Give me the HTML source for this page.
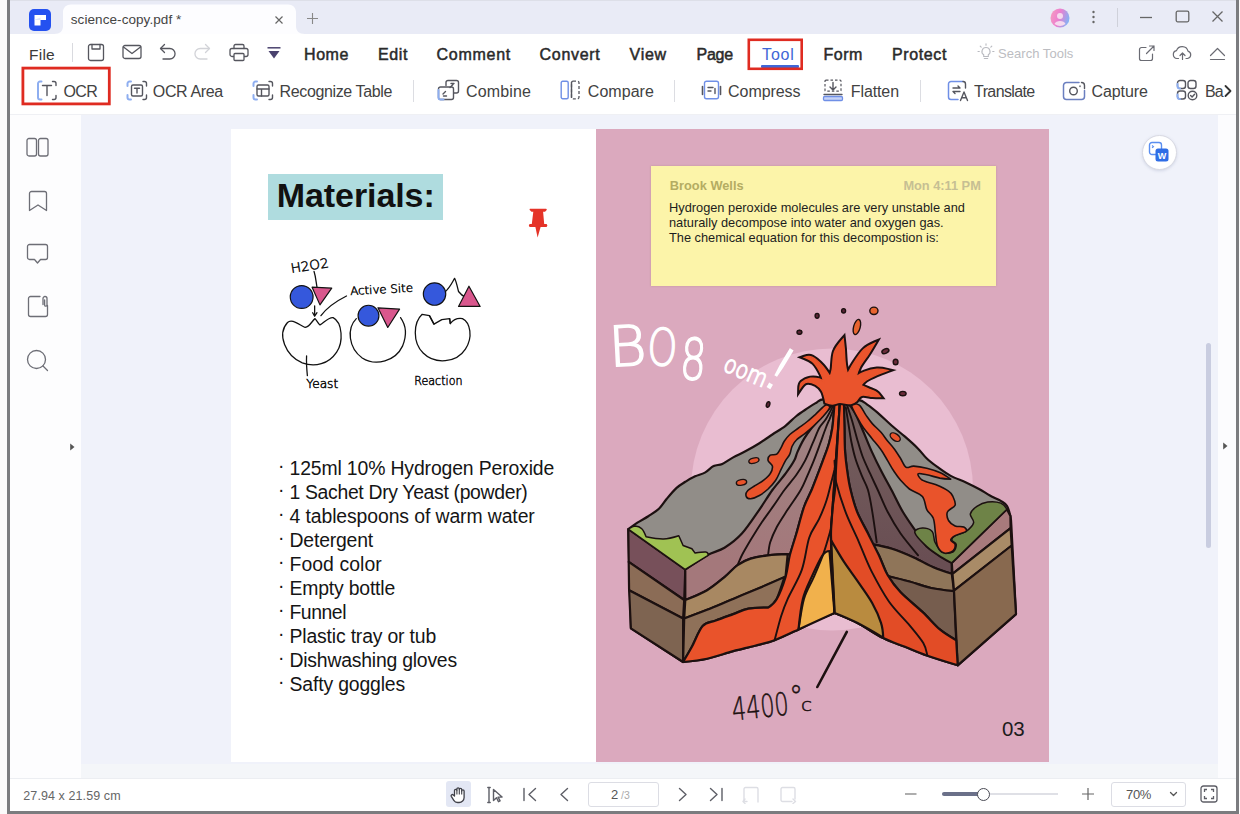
<!DOCTYPE html>
<html lang="en">
<head>
<meta charset="utf-8">
<title>science-copy.pdf</title>
<style>
*{box-sizing:border-box;margin:0;padding:0}
html,body{width:1240px;height:814px;overflow:hidden;background:#fbfbfb;font-family:"Liberation Sans",sans-serif;color:#2b2b2b}
#win{position:absolute;left:7px;top:0;width:1232px;height:814px;background:#fff;border-left:3px solid #7b7c7f;border-right:3px solid #7b7c7f;border-bottom:3px solid #7b7c7f;overflow:hidden}
#app{position:absolute;left:-10px;top:0;width:1240px;height:814px}
.abs{position:absolute}
.t{position:absolute;white-space:nowrap;line-height:1}
#titlebar{left:10px;top:0;width:1226px;height:34px;background:#e9ebf6;border-top:1px solid #dddfe8}
#tab{left:62px;top:5px;width:236px;height:29px;background:#f7f8fc;border-radius:8px 8px 0 0}
#menurow{left:10px;top:34px;width:1226px;height:38px;background:#fff}
#toolrow{left:10px;top:72px;width:1226px;height:43px;background:#fff;border-bottom:1px solid #eff0f4}
#main{left:10px;top:115px;width:1226px;height:663px;background:#f0f2fa}
#sidebar{left:10px;top:115px;width:70.500px;height:663px;background:#fdfdfe}
#status{left:10px;top:778px;width:1226px;height:34px;background:#fff;border-top:1px solid #eceef2}
.m{font-size:16px;font-weight:normal;-webkit-text-stroke:0.5px #2a2a2a;color:#2a2a2a;top:47px}
.tb{font-size:16px;color:#424242;top:84px}
.sep{position:absolute;width:1px;background:#dcdde2}
.li{font-size:19.400px;color:#151515}
#pageL{left:231px;top:129px;width:365px;height:633px;background:#fff}
#pageR{left:596px;top:129px;width:453px;height:633px;background:#dba9be}
</style>
</head>
<body>
<div id="win"><div id="app">

<!-- TITLE BAR -->
<div id="titlebar" class="abs"></div>
<svg class="abs" style="left:54px;top:4px" width="252" height="30" viewBox="54 4 252 30"><path d="M54 34C60 34 63 31 63 26V12C63 7.500 66.500 4.500 71 4.500H288C292.500 4.500 296 7.500 296 12V26C296 31 299 34 305 34Z" fill="#fdfdff"/></svg>

<svg class="abs" style="left:29px;top:9px" width="22" height="22" viewBox="0 0 22 22"><rect x="0" y="0" width="22" height="22" rx="5" fill="#2451f0"/><path d="M5.5 6h11.5v5h-5.5v5.5h-6z" fill="#fff"/><path d="M5.5 10.8l6-2.2v2.4h-6z" fill="#dfe6ff"/></svg>
<div class="t" id="tTitle" style="left:70.8px;top:13px;font-size:13.500px;color:#444;letter-spacing:0.07px">science-copy.pdf *</div>
<svg class="abs" style="left:274px;top:15px" width="10" height="10" viewBox="0 0 10 10"><path d="M1.5 1.5l7 7M8.500 1.5l-7 7" stroke="#666" stroke-width="1.2" fill="none"/></svg>
<svg class="abs" style="left:306px;top:12px" width="13" height="13" viewBox="0 0 13 13"><path d="M6.500 1v11M1 6.500h11" stroke="#888" stroke-width="1.1" fill="none"/></svg>
<svg class="abs" style="left:1050px;top:8px" width="20" height="20" viewBox="0 0 20 20"><defs><linearGradient id="av" x1="0" y1="0.3" x2="1" y2="0.6"><stop offset="0" stop-color="#f59ac0"/><stop offset="0.45" stop-color="#ec7fd0"/><stop offset="1" stop-color="#7fb4f6"/></linearGradient></defs><circle cx="10" cy="10" r="9.500" fill="url(#av)"/><circle cx="10" cy="8" r="3" fill="#f6d9ee"/><path d="M4.500 16c1-4 10-4 11 0a9 9 0 0 1-11 0z" fill="#f6d9ee"/></svg>
<svg class="abs" style="left:1091px;top:9px" width="5" height="16" viewBox="0 0 5 16"><circle cx="2.500" cy="3" r="1.200" fill="#666"/><circle cx="2.500" cy="8" r="1.200" fill="#666"/><circle cx="2.500" cy="13" r="1.200" fill="#666"/></svg>
<div class="sep" style="left:1117px;top:8px;height:19px;background:#cfd1da"></div>
<svg class="abs" style="left:1139px;top:10px" width="14" height="14" viewBox="0 0 14 14"><path d="M1 7.500h12" stroke="#666" stroke-width="1.300"/></svg>
<svg class="abs" style="left:1174.500px;top:10px" width="15" height="13" viewBox="0 0 15 13"><rect x="1.200" y="1.200" width="12.600" height="10.600" rx="1.500" fill="none" stroke="#666" stroke-width="1.300"/></svg>
<svg class="abs" style="left:1211px;top:10px" width="13" height="13" viewBox="0 0 13 13"><path d="M1.500 1.500l10 10M11.500 1.500l-10 10" stroke="#666" stroke-width="1.300" fill="none"/></svg>
<!--TITLE-CONTENT-->

<!-- MENU ROW -->
<div id="menurow" class="abs"></div>

<div class="t" id="mFile" style="left:29.1px;top:47px;font-size:15.5px;color:#3a3a3a;letter-spacing:0.2px">File</div>
<div class="sep" style="left:72px;top:43px;height:19px;background:#d9dadf"></div>
<svg class="abs" style="left:87px;top:43px" width="18" height="19" viewBox="0 0 18 19"><path d="M3.500 1.500h11a2 2 0 0 1 2 2v12a2 2 0 0 1-2 2h-11a2 2 0 0 1-2-2v-12a2 2 0 0 1 2-2z" stroke="#55565e" stroke-width="1.3" fill="none" stroke-linecap="round" stroke-linejoin="round"/><path d="M5 1.500v4.500h8v-4.500" stroke="#55565e" stroke-width="1.3" fill="none" stroke-linecap="round" stroke-linejoin="round"/></svg>
<svg class="abs" style="left:122px;top:44px" width="20" height="16" viewBox="0 0 20 16"><rect x="1" y="1.500" width="18" height="13" rx="2" stroke="#55565e" stroke-width="1.3" fill="none" stroke-linecap="round" stroke-linejoin="round"/><path d="M1.500 3l8.500 6.500 8.500-6.500" stroke="#55565e" stroke-width="1.3" fill="none" stroke-linecap="round" stroke-linejoin="round"/></svg>
<svg class="abs" style="left:159px;top:43px" width="18" height="18" viewBox="0 0 18 18"><path d="M5.500 1.500l-4 4 4 4" stroke="#55565e" stroke-width="1.3" fill="none" stroke-linecap="round" stroke-linejoin="round"/><path d="M1.800 5.500h9a5 5 0 0 1 0 10.500h-6.800" stroke="#55565e" stroke-width="1.3" fill="none" stroke-linecap="round" stroke-linejoin="round"/></svg>
<svg class="abs" style="left:193px;top:43px" width="18" height="18" viewBox="0 0 18 18"><path d="M12.500 1.500l4 4-4 4" stroke="#d2d3d8" stroke-width="1.300" fill="none" stroke-linecap="round" stroke-linejoin="round"/><path d="M16.200 5.500h-9a5 5 0 0 0 0 10.500h6.800" stroke="#d2d3d8" stroke-width="1.300" fill="none" stroke-linecap="round"/></svg>
<svg class="abs" style="left:229px;top:43px" width="20" height="19" viewBox="0 0 20 19"><path d="M5 5.500v-2.500a1.500 1.500 0 0 1 1.500-1.500h7a1.500 1.500 0 0 1 1.500 1.500v2.500" stroke="#55565e" stroke-width="1.3" fill="none" stroke-linecap="round" stroke-linejoin="round"/><rect x="1" y="5.500" width="18" height="8" rx="2" stroke="#55565e" stroke-width="1.3" fill="none" stroke-linecap="round" stroke-linejoin="round"/><rect x="5" y="10.500" width="10" height="7" rx="1" fill="#fff" stroke="#55565e" stroke-width="1.300"/></svg>
<svg class="abs" style="left:267px;top:46px" width="14" height="14" viewBox="0 0 14 14"><path d="M0.500 1.800h13" stroke="#4a426e" stroke-width="1.500"/><path d="M1.500 5h11l-5.500 7.500z" fill="#4a426e"/></svg>
<div class="t m" id="mHome" style="left:304.1px;letter-spacing:0.53px">Home</div>
<div class="t m" id="mEdit" style="left:378.1px;letter-spacing:0.56px">Edit</div>
<div class="t m" id="mComment" style="left:436.6px;letter-spacing:0.71px">Comment</div>
<div class="t m" id="mConvert" style="left:539.6px;letter-spacing:0.68px">Convert</div>
<div class="t m" id="mView" style="left:629.6px;letter-spacing:0.73px">View</div>
<div class="t m" id="mPage" style="left:696.6px;letter-spacing:-0.27px">Page</div>
<div class="t m" id="mTool" style="left:762.1px;color:#3f66d6;-webkit-text-stroke:0px;letter-spacing:0.8px">Tool</div>
<div class="abs" style="left:761px;top:64.500px;width:38px;height:3px;background:#3f66d6;border-radius:1px"></div>
<svg class="abs" style="left:744px;top:35px" width="64" height="40" viewBox="744 35 64 40"><rect x="748.800" y="39.800" width="52.900" height="29" fill="none" stroke="#df2b21" stroke-width="2.600"/></svg>
<div class="t m" id="mForm" style="left:823.6px;letter-spacing:0.43px">Form</div>
<div class="t m" id="mProtect" style="left:892.1px;letter-spacing:0.59px">Protect</div>
<svg class="abs" style="left:977px;top:43px" width="18" height="18" viewBox="0 0 18 18"><g stroke="#b9bac0" stroke-width="1.100" fill="none" stroke-linecap="round"><path d="M9 4.500a4 4 0 0 1 2.300 7.300v1.700h-4.600v-1.700a4 4 0 0 1 2.300-7.300z"/><path d="M7.300 15.500h3.400M9 0.800v1.500M3.200 3.200l1 1M14.800 3.200l-1 1M1 8.500h1.300M15.700 8.500h1.300"/></g></svg>
<div class="t" id="mSearch" style="left:998.1px;top:47px;font-size:13px;color:#bcbdc2;letter-spacing:0.03px">Search Tools</div>
<svg class="abs" style="left:1138px;top:45px" width="18" height="17" viewBox="0 0 18 17"><g stroke="#6a6b73" stroke-width="1.200" fill="none" stroke-linecap="round" stroke-linejoin="round"><path d="M8 2.500h-4.500a2 2 0 0 0-2 2v9a2 2 0 0 0 2 2h9a2 2 0 0 0 2-2v-4.500"/><path d="M8.500 8.500l7.500-7.500M11.500 1h4.500v4.500"/></g></svg>
<svg class="abs" style="left:1172px;top:44px" width="21" height="17" viewBox="0 0 21 17"><g stroke="#6a6b73" stroke-width="1.200" fill="none" stroke-linecap="round" stroke-linejoin="round"><path d="M6.500 14.500h-1.500a4 4 0 0 1-0.500-7.900a6 6 0 0 1 11.500 0.500a3.800 3.800 0 0 1-0.500 7.400h-1.500"/><path d="M10.500 15.500v-6M8 11.500l2.500-2.500 2.500 2.500"/></g></svg>
<svg class="abs" style="left:1209px;top:46px" width="17" height="15" viewBox="0 0 17 15"><g stroke="#6a6b73" stroke-width="1.200" fill="none" stroke-linecap="round" stroke-linejoin="round"><path d="M1.500 9.500l7-7 7 7"/><path d="M1.500 13.500h14"/></g></svg>
<!--MENU-CONTENT-->

<!-- TOOL ROW -->
<div id="toolrow" class="abs"></div>

<svg class="abs" style="left:18px;top:63px" width="96" height="46" viewBox="18 63 96 46"><rect x="22.900" y="68.100" width="86.400" height="35.800" fill="none" stroke="#df2b21" stroke-width="2.800"/></svg>
<svg class="abs" style="left:36px;top:80px" width="22" height="21" viewBox="0 0 22 21"><path d="M5.500 1.500h-1.500a2 2 0 0 0-2 2v14a2 2 0 0 0 2 2h1.500" stroke="#8eaef0" stroke-width="2" fill="none" stroke-linecap="round" stroke-linejoin="round"/><path d="M16.500 1.500h1.500a2 2 0 0 1 2 2v2M16.500 19.500h1.500a2 2 0 0 0 2-2v-2" stroke="#55565e" stroke-width="1.4" fill="none" stroke-linecap="round" stroke-linejoin="round"/><path d="M6.500 5.500h9M11 5.500v10" stroke="#55565e" stroke-width="1.4" fill="none" stroke-linecap="round" stroke-linejoin="round"/></svg>
<div class="t tb" id="tOCR" style="left:63.6px;letter-spacing:-0.67px">OCR</div>
<svg class="abs" style="left:126px;top:80px" width="22" height="21" viewBox="0 0 22 21"><path d="M5 1.500h-1.500a2 2 0 0 0-2 2v2.500M5 19.500h-1.500a2 2 0 0 1-2-2v-2.500" stroke="#8eaef0" stroke-width="2" fill="none" stroke-linecap="round" stroke-linejoin="round"/><path d="M17 1.500h1.500a2 2 0 0 1 2 2v2.500M17 19.500h1.500a2 2 0 0 0 2-2v-2.500" stroke="#55565e" stroke-width="1.4" fill="none" stroke-linecap="round" stroke-linejoin="round"/><rect x="5.500" y="5" width="11" height="11" rx="1.500" stroke="#55565e" stroke-width="1.4" fill="none" stroke-linecap="round" stroke-linejoin="round"/><path d="M8.500 8.200h5M11 8.200v4.800" stroke="#55565e" stroke-width="1.4" fill="none" stroke-linecap="round" stroke-linejoin="round"/></svg>
<div class="t tb" id="tOCRArea" style="left:152.85px;letter-spacing:-0.36px">OCR Area</div>
<svg class="abs" style="left:252px;top:80px" width="22" height="21" viewBox="0 0 22 21"><path d="M5 1.500h-1.500a2 2 0 0 0-2 2v2.500M5 19.500h-1.500a2 2 0 0 1-2-2v-2.500" stroke="#8eaef0" stroke-width="2" fill="none" stroke-linecap="round" stroke-linejoin="round"/><path d="M17 1.500h1.500a2 2 0 0 1 2 2v2.500M17 19.500h1.500a2 2 0 0 0 2-2v-2.500" stroke="#55565e" stroke-width="1.4" fill="none" stroke-linecap="round" stroke-linejoin="round"/><rect x="5" y="5" width="12" height="11" rx="1.500" stroke="#55565e" stroke-width="1.4" fill="none" stroke-linecap="round" stroke-linejoin="round"/><path d="M5 9h12M9.500 9v7" stroke="#55565e" stroke-width="1.4" fill="none" stroke-linecap="round" stroke-linejoin="round"/></svg>
<div class="t tb" id="tRecog" style="left:279.6px;letter-spacing:-0.38px">Recognize Table</div>
<div class="sep" style="left:413px;top:80px;height:22px"></div>
<svg class="abs" style="left:437px;top:79px" width="23" height="22" viewBox="0 0 23 22"><path d="M9 6.500v-3a2 2 0 0 1 2-2h8.500a2 2 0 0 1 2 2v8.500a2 2 0 0 1-2 2h-3" stroke="#55565e" stroke-width="1.4" fill="none" stroke-linecap="round" stroke-linejoin="round"/><path d="M3.500 8h11a2 2 0 0 1 2 2v8.500a2 2 0 0 1-2 2h-11a2 2 0 0 1-2-2v-8.500a2 2 0 0 1 2-2z" fill="#fff" stroke="#55565e" stroke-width="1.4" fill="none" stroke-linecap="round" stroke-linejoin="round"/><path d="M1.500 11v7.500a2 2 0 0 0 2 2h3" stroke="#8eaef0" stroke-width="2" fill="none" stroke-linecap="round" stroke-linejoin="round"/><path d="M6 15l2.500-2.500M6.500 17h3M13 8.500l3-3M14 4.500h3" stroke="#55565e" stroke-width="1.4" fill="none" stroke-linecap="round" stroke-linejoin="round"/></svg>
<div class="t tb" id="tCombine" style="left:466.1px;letter-spacing:0.11px">Combine</div>
<svg class="abs" style="left:560px;top:80px" width="21" height="20" viewBox="0 0 21 20"><rect x="1.200" y="1.200" width="7" height="17.600" rx="1.500" stroke="#6f8fe6" stroke-width="1.400" fill="none"/><rect x="11.500" y="1.200" width="7.500" height="17.600" rx="1.500" stroke="#55565e" stroke-width="1.300" fill="none" stroke-dasharray="3 2"/><path d="M11.500 2v16" stroke="#55565e" stroke-width="1.400"/></svg>
<div class="t tb" id="tCompare" style="left:587.85px;letter-spacing:0.03px">Compare</div>
<div class="sep" style="left:674px;top:80px;height:22px"></div>
<svg class="abs" style="left:701px;top:80px" width="21" height="21" viewBox="0 0 21 21"><rect x="3.500" y="1.200" width="14" height="17.600" rx="2" stroke="#6f8fe6" stroke-width="1.400" fill="none"/><path d="M1.500 6.500v8M19.500 6.500v8" stroke="#55565e" stroke-width="1.600" stroke-linecap="round"/><path d="M7 7.500h5M7 11h3M14 8.500v5" stroke="#55565e" stroke-width="1.4" fill="none" stroke-linecap="round" stroke-linejoin="round"/></svg>
<div class="t tb" id="tCompress" style="left:728.1px;letter-spacing:-0.08px">Compress</div>
<svg class="abs" style="left:822px;top:79px" width="22" height="23" viewBox="0 0 22 23"><rect x="3" y="1.200" width="16" height="11" rx="1" stroke="#55565e" stroke-width="1.200" fill="none" stroke-dasharray="2.500 2"/><path d="M11 3.500v7M8 8l3 3 3-3" stroke="#55565e" stroke-width="1.4" fill="none" stroke-linecap="round" stroke-linejoin="round"/><path d="M2 15.500h18" stroke="#55565e" stroke-width="1.4" fill="none" stroke-linecap="round" stroke-linejoin="round"/><rect x="1.500" y="17.500" width="19" height="4" rx="1.200" fill="#c6d3f7" stroke="#6f8fe6" stroke-width="1.300"/></svg>
<div class="t tb" id="tFlatten" style="left:850.85px;letter-spacing:-0.12px">Flatten</div>
<div class="sep" style="left:920px;top:80px;height:22px"></div>
<svg class="abs" style="left:947px;top:80px" width="22" height="22" viewBox="0 0 22 22"><path d="M16 1.500h-12a2.500 2.500 0 0 0-2.500 2.500v13a2.500 2.500 0 0 0 2.500 2.500h7" stroke="#6f8fe6" stroke-width="1.500" fill="none" stroke-linecap="round"/><path d="M16 1.500a2.500 2.500 0 0 1 2.500 2.500v4" stroke="#55565e" stroke-width="1.4" fill="none" stroke-linecap="round" stroke-linejoin="round"/><path d="M6 8h7M11 6l2 2M13 11.500h-7M8 13.500l-2-2" stroke="#55565e" stroke-width="1.4" fill="none" stroke-linecap="round" stroke-linejoin="round"/><path d="M13.500 20.500l3.500-8.500 3.500 8.500M14.800 17.800h4.400" stroke="#55565e" stroke-width="1.4" fill="none" stroke-linecap="round" stroke-linejoin="round"/></svg>
<div class="t tb" id="tTranslate" style="left:974.1px;letter-spacing:-0.62px">Translate</div>
<svg class="abs" style="left:1062px;top:81px" width="24" height="20" viewBox="0 0 24 20"><path d="M17 1.500h-12.500a3 3 0 0 0-3 3v11a3 3 0 0 0 3 3h15a3 3 0 0 0 3-3v-6" stroke="#6b7fc0" stroke-width="1.500" fill="none" stroke-linecap="round"/><path d="M19.500 1.500a3 3 0 0 1 3 3v3" stroke="#55565e" stroke-width="1.4" fill="none" stroke-linecap="round" stroke-linejoin="round"/><circle cx="11.500" cy="10" r="3.800" stroke="#55565e" stroke-width="1.4" fill="none" stroke-linecap="round" stroke-linejoin="round"/><path d="M18 5v0.500" stroke="#55565e" stroke-width="1.4" fill="none" stroke-linecap="round" stroke-linejoin="round"/></svg>
<div class="t tb" id="tCapture" style="left:1091.6px;letter-spacing:-0.12px">Capture</div>
<svg class="abs" style="left:1176px;top:79px" width="22" height="22" viewBox="0 0 22 22"><rect x="1.500" y="1.500" width="8" height="8" rx="2.500" stroke="#55565e" stroke-width="1.4" fill="none" stroke-linecap="round" stroke-linejoin="round"/><rect x="12" y="1.500" width="8" height="8" rx="2.500" stroke="#55565e" stroke-width="1.4" fill="none" stroke-linecap="round" stroke-linejoin="round"/><rect x="1.500" y="12" width="8" height="8" rx="2.500" stroke="#55565e" stroke-width="1.4" fill="none" stroke-linecap="round" stroke-linejoin="round"/><circle cx="16.500" cy="16.500" r="4.300" stroke="#55565e" stroke-width="1.4" fill="none" stroke-linecap="round" stroke-linejoin="round"/><path d="M14.600 16.500l1.500 1.500 2.500-2.800" stroke="#55565e" stroke-width="1.4" fill="none" stroke-linecap="round" stroke-linejoin="round"/><path d="M1.500 5v2a2.500 2.500 0 0 0 2.500 2.500M1.500 15.500v2a2.500 2.500 0 0 0 2.500 2.500" stroke="#8eaef0" stroke-width="2" fill="none" stroke-linecap="round" stroke-linejoin="round"/></svg>
<div class="t tb" id="tBa" style="left:1204.9px;letter-spacing:-0.8px">Ba</div>
<svg class="abs" style="left:1223px;top:84px" width="10" height="14" viewBox="0 0 10 14"><path d="M2.500 2l5 5-5 5" stroke="#333" stroke-width="1.800" fill="none" stroke-linecap="round" stroke-linejoin="round"/></svg>
<!--TOOL-CONTENT-->

<!-- MAIN -->
<div id="main" class="abs"></div>
<div class="abs" style="left:80.500px;top:764px;width:1137.500px;height:14px;background:#f4f6f9"></div>
<div id="sidebar" class="abs"></div>

<svg class="abs" style="left:26px;top:137px" width="23" height="21" viewBox="0 0 23 21"><rect x="1" y="1.500" width="9.500" height="17.500" rx="2" stroke="#6d6e76" stroke-width="1.3" fill="none" stroke-linecap="round" stroke-linejoin="round"/><rect x="12.500" y="1.500" width="9.500" height="17.500" rx="2" stroke="#6d6e76" stroke-width="1.3" fill="none" stroke-linecap="round" stroke-linejoin="round"/></svg>
<svg class="abs" style="left:28px;top:190px" width="20" height="22" viewBox="0 0 20 22"><path d="M1.500 20.500v-17a2 2 0 0 1 2-2h13a2 2 0 0 1 2 2v17l-8.500-5.500z" stroke="#6d6e76" stroke-width="1.3" fill="none" stroke-linecap="round" stroke-linejoin="round"/></svg>
<svg class="abs" style="left:26px;top:243px" width="23" height="22" viewBox="0 0 23 22"><path d="M3.500 1.500h16a2 2 0 0 1 2 2v11a2 2 0 0 1-2 2h-5l-3 3.500-3-3.500h-5a2 2 0 0 1-2-2v-11a2 2 0 0 1 2-2z" stroke="#6d6e76" stroke-width="1.3" fill="none" stroke-linecap="round" stroke-linejoin="round"/></svg>
<svg class="abs" style="left:27px;top:295px" width="22" height="23" viewBox="0 0 22 23"><path d="M13 1.500h-9.500a2 2 0 0 0-2 2v16a2 2 0 0 0 2 2h15a2 2 0 0 0 2-2v-9" stroke="#6d6e76" stroke-width="1.3" fill="none" stroke-linecap="round" stroke-linejoin="round"/><path d="M16 9.500v-6a2 2 0 0 1 4 0v6.500a1.200 1.200 0 0 1-2.400 0v-5" stroke="#6d6e76" stroke-width="1.3" fill="none" stroke-linecap="round" stroke-linejoin="round"/></svg>
<svg class="abs" style="left:26px;top:349px" width="23" height="23" viewBox="0 0 23 23"><circle cx="10.500" cy="10.500" r="9" stroke="#6d6e76" stroke-width="1.3" fill="none" stroke-linecap="round" stroke-linejoin="round"/><path d="M17 17l4.500 4.500" stroke="#6d6e76" stroke-width="1.3" fill="none" stroke-linecap="round" stroke-linejoin="round"/></svg>
<svg class="abs" style="left:69px;top:442px" width="7" height="10" viewBox="0 0 7 10"><path d="M1.200 1.500l4.300 3.500-4.300 3.500z" fill="#555"/></svg>
<!--SIDEBAR-CONTENT-->

<div id="pageL" class="abs"></div>
<div id="pageR" class="abs"></div>
<!--PAGEL-START-->
<div class="abs" style="left:268px;top:173.500px;width:174.500px;height:46.500px;background:#afdcdf"></div>
<div class="t" id="hMat" style="left:276.8px;top:178px;font-size:34px;font-weight:bold;color:#111;letter-spacing:-0.09px">Materials:</div>
<svg class="abs" style="left:528px;top:208px" width="20" height="30" viewBox="0 0 20 30"><path d="M2 0.800h16a0.800 0.800 0 0 1 0.500 1.400l-1.500 1.600h-1.900l1.100 12.100h2.400l0.800 1.500-0.800 1.500h-6l-3 10.700-2.200-10.700h-5.800l-0.800-1.500 0.800-1.500h2.200l1.500-12.100h-1.800l-1.500-1.600a0.800 0.800 0 0 1 0-1.400z" fill="#e53328"/></svg>
<svg class="abs" style="left:260px;top:240px" width="240" height="160" viewBox="0 0 1221 814">
<g stroke="#111" stroke-width="6.500" fill="none" stroke-linecap="round" stroke-linejoin="round">
<path d="M140 420C160 400 190 425 230 445C255 440 265 410 280 400C290 410 295 425 305 432C325 420 350 392 372 395C420 420 425 520 390 570C350 630 280 650 215 625C130 590 85 480 140 420Z" fill="#fff"/>
<path d="M490 400C440 450 450 550 520 600C590 645 690 615 725 540C750 480 740 430 715 395" fill="#fff"/>
<path d="M825 378C780 420 775 520 830 575C890 635 1000 625 1045 555C1085 495 1070 420 1030 400C1000 395 980 410 968 425L965 400L925 405L885 428L862 385Z" fill="#fff"/>
<path d="M862 385L885 428M965 400L968 425"/>
<path d="M275 160C285 190 285 220 292 250"/>
<path d="M278 335V385M268 370L278 388L290 370"/>
<path d="M440 285C390 310 340 345 310 385"/>
<path d="M237 590C235 630 238 660 241 690"/>
<path d="M940 265C965 245 978 215 990 195C1000 215 1005 245 1010 262C1020 275 1030 285 1045 290"/>
</g>
<g stroke="#111" stroke-width="6" stroke-linejoin="round">
<circle cx="212" cy="290" r="58" fill="#3558dc"/>
<path d="M265 240L365 245L305 330Z" fill="#d9578d"/>
<circle cx="552" cy="385" r="53" fill="#3558dc"/>
<path d="M600 345L710 352L650 445Z" fill="#d9578d"/>
<circle cx="888" cy="275" r="57" fill="#3558dc"/>
<path d="M1010 338L1120 338L1063 235Z" fill="#d9578d"/>
</g>
<g fill="#111" stroke="#111" stroke-width="2.500" font-family="DejaVu Sans, Liberation Sans, sans-serif" font-weight="200">
<text x="160" y="168" font-size="66" transform="rotate(-9 160 168)" textLength="195" lengthAdjust="spacingAndGlyphs">H2O2</text>
<text x="460" y="280" font-size="58" transform="rotate(-3 460 280)" textLength="320" lengthAdjust="spacingAndGlyphs">Active Site</text>
<text x="236" y="752" font-size="58" textLength="162" lengthAdjust="spacingAndGlyphs">Yeast</text>
<text x="785" y="738" font-size="58" textLength="245" lengthAdjust="spacingAndGlyphs">Reaction</text>
</g>
</svg>

<div class="t li" style="left:278px;top:459px;margin-top:-3.500px">·</div><div class="t li" id="li0" style="left:289.5px;top:459px;letter-spacing:-0.14px">125ml 10% Hydrogen Peroxide</div>
<div class="t li" style="left:278px;top:483.05px;margin-top:-3.500px">·</div><div class="t li" id="li1" style="left:289.5px;top:483.05px;letter-spacing:-0.33px">1 Sachet Dry Yeast (powder)</div>
<div class="t li" style="left:278px;top:507.1px;margin-top:-3.500px">·</div><div class="t li" id="li2" style="left:289.5px;top:507.1px;letter-spacing:-0.1px">4 tablespoons of warm water</div>
<div class="t li" style="left:278px;top:531.15px;margin-top:-3.500px">·</div><div class="t li" id="li3" style="left:289.5px;top:531.15px;letter-spacing:-0.18px">Detergent</div>
<div class="t li" style="left:278px;top:555.2px;margin-top:-3.500px">·</div><div class="t li" id="li4" style="left:289.5px;top:555.2px;letter-spacing:0.07px">Food color</div>
<div class="t li" style="left:278px;top:579.25px;margin-top:-3.500px">·</div><div class="t li" id="li5" style="left:289.5px;top:579.25px;letter-spacing:-0.19px">Empty bottle</div>
<div class="t li" style="left:278px;top:603.3px;margin-top:-3.500px">·</div><div class="t li" id="li6" style="left:289.5px;top:603.3px;letter-spacing:-0.47px">Funnel</div>
<div class="t li" style="left:278px;top:627.35px;margin-top:-3.500px">·</div><div class="t li" id="li7" style="left:289.5px;top:627.35px;letter-spacing:-0.17px">Plastic tray or tub</div>
<div class="t li" style="left:278px;top:651.4px;margin-top:-3.500px">·</div><div class="t li" id="li8" style="left:289.5px;top:651.4px;letter-spacing:-0.22px">Dishwashing gloves</div>
<div class="t li" style="left:278px;top:675.45px;margin-top:-3.500px">·</div><div class="t li" id="li9" style="left:289.5px;top:675.45px;letter-spacing:-0.15px">Safty goggles</div>

<!--PAGEL-END-->
<!--PAGEL-CONTENT-->
<!--PAGER-START-->
<svg class="abs" style="left:596px;top:129px" width="453" height="633" viewBox="596 129 453 633">
<circle cx="832" cy="489.500" r="141" fill="#e9bdd1"/>
<defs><linearGradient id="gl" gradientUnits="userSpaceOnUse" x1="0" y1="400" x2="0" y2="560"><stop offset="0" stop-color="#9d8482"/><stop offset="1" stop-color="#a4787b"/></linearGradient><linearGradient id="gr" gradientUnits="userSpaceOnUse" x1="0" y1="400" x2="0" y2="560"><stop offset="0" stop-color="#76615f"/><stop offset="1" stop-color="#694e53"/></linearGradient></defs>
<path d="M628.3 529.2C628.3 529.2 634.1 524.9 637.4 522.7C640.8 520.5 644.7 518.5 648.3 516.2C651.9 513.8 656.1 511.5 659.2 508.5C662.3 505.6 663.9 502.2 666.8 498.8C669.7 495.3 673.5 490.7 676.6 487.9C679.7 485.0 682.2 483.7 685.3 481.8C688.4 479.8 691.9 477.8 695.1 476.3C698.4 474.8 701.8 474.3 704.9 472.6C708.0 470.9 710.7 467.5 713.6 466.1C716.5 464.6 719.1 465.4 722.3 463.9C725.6 462.5 729.2 459.6 733.2 457.4C737.2 455.2 741.9 453.2 746.3 450.8C750.6 448.5 755.0 445.9 759.4 443.2C763.7 440.5 768.1 437.4 772.4 434.5C776.8 431.6 781.5 428.9 785.5 425.8C789.5 422.7 792.7 418.9 796.4 416.0C800.0 413.1 804.0 410.6 807.3 408.4C810.5 406.2 813.1 404.5 816.0 402.9C818.9 401.4 817.8 399.8 824.7 399.2C831.5 398.7 849.9 398.7 857.1 399.7C864.3 400.7 864.4 402.8 868.0 405.1C871.6 407.5 874.9 410.4 878.9 413.8C882.9 417.3 887.6 422.0 891.9 425.8C896.3 429.6 900.6 432.9 905.0 436.7C909.4 440.5 914.4 445.0 918.1 448.7C921.7 452.3 923.5 455.4 926.8 458.5C930.0 461.6 933.7 464.3 937.7 467.2C941.7 470.1 946.0 473.3 950.7 475.9C955.4 478.4 961.2 480.2 966.0 482.4C970.7 484.6 975.0 486.8 979.0 489.0C983.0 491.1 986.3 493.5 989.9 495.5C993.5 497.5 998.0 499.2 1000.8 500.9C1003.6 502.7 1005.3 503.4 1006.9 505.9C1008.5 508.5 1009.7 513.0 1010.4 516.1C1011.1 519.3 1011.3 524.8 1011.3 524.8C1011.3 524.8 1016.0 614.1 1016.0 614.1C1016.0 614.1 957.7 665.3 957.7 665.3C957.7 665.3 935.6 658.6 926.8 655.5C918.0 652.4 912.3 649.7 905.0 646.8C897.7 643.9 891.2 642.1 883.2 638.1C875.2 634.1 865.2 627.0 857.1 622.8C849.0 618.6 834.7 613.0 834.7 613.0C834.7 613.0 822.0 617.9 816.0 620.6C809.9 623.4 805.4 626.1 798.5 629.4C791.7 632.6 781.9 637.5 774.6 640.2C767.3 643.0 761.9 643.9 755.0 645.7C748.1 647.5 741.2 649.0 733.2 651.1C725.2 653.3 715.4 656.9 707.1 658.8C698.8 660.6 683.1 662.0 683.1 662.0C683.1 662.0 630.9 628.3 630.9 628.3C630.9 628.3 628.3 529.2 628.3 529.2Z" fill="#918d88" stroke="#1c1010" stroke-width="2.2" stroke-linejoin="round" stroke-linecap="round"/>
<polygon points="628.3,529.2 685.3,569.5 684.2,600.0 628.7,561.9" fill="#77505a" stroke="#1c1010" stroke-width="2.2" stroke-linejoin="round"/>
<polygon points="628.7,561.9 684.2,600.0 683.1,618.5 629.1,590.2" fill="#8b6c56" stroke="#1c1010" stroke-width="2.2" stroke-linejoin="round"/>
<polygon points="629.1,590.2 683.1,618.5 683.1,662.0 630.9,628.3" fill="#7e6451" stroke="#1c1010" stroke-width="2.2" stroke-linejoin="round"/>
<path d="M685.3 569.5C685.3 569.5 700.6 559.0 707.1 555.3C713.6 551.7 718.7 551.3 724.5 547.7C730.3 544.1 736.1 539.9 741.9 533.5C747.7 527.2 754.3 516.8 759.4 509.6C764.4 502.3 768.1 496.0 772.4 490.0C776.8 484.1 781.9 478.6 785.5 473.7C789.1 468.8 792.2 464.3 794.2 460.6C796.2 457.0 795.8 455.6 797.5 451.9C799.1 448.3 801.6 442.9 804.0 438.9C806.4 434.9 808.7 431.6 811.6 428.0C814.5 424.4 818.0 420.9 821.4 417.1C824.9 413.3 830.1 407.3 832.3 405.1C834.5 402.9 834.3 402.0 834.5 404.0C834.7 406.0 833.8 413.1 833.4 417.1C833.0 421.1 833.0 423.6 832.3 428.0C831.6 432.3 830.6 437.8 829.0 443.2C827.5 448.7 824.9 455.2 822.9 460.6C820.9 466.1 818.9 471.0 817.1 475.9C815.2 480.8 813.8 484.9 811.6 490.0C809.4 495.2 806.5 499.7 804.0 507.0C801.5 514.2 798.7 525.5 796.4 533.5C794.0 541.6 789.8 555.3 789.8 555.3C789.8 555.3 791.3 554.2 787.7 554.2C784.0 554.2 774.2 554.6 768.1 555.3C761.9 556.0 755.7 557.0 750.6 558.6C745.6 560.2 741.9 562.0 737.6 565.1C733.2 568.2 729.6 572.9 724.5 577.1C719.4 581.3 713.6 586.4 707.1 590.2C700.6 594.0 685.3 600.0 685.3 600.0C685.3 600.0 685.3 569.5 685.3 569.5Z" fill="url(#gl)" stroke="#1c1010" stroke-width="2.2" stroke-linejoin="round" stroke-linecap="round"/>
<path d="M833.0 406.2C831.8 408.4 828.1 415.6 825.8 419.3C823.5 422.9 821.4 424.0 819.2 428.0C817.1 432.0 815.1 437.8 812.7 443.2C810.3 448.7 807.8 455.4 805.1 460.6C802.4 465.9 799.8 469.9 796.4 474.8C792.9 479.7 788.4 484.6 784.4 490.0C780.4 495.5 776.2 502.0 772.4 507.4C768.6 512.9 765.2 517.2 761.5 522.7C757.9 528.1 753.9 534.6 750.6 540.1C747.4 545.5 744.1 551.1 741.9 555.3C739.8 559.5 738.3 563.5 737.6 565.1" fill="none" stroke="#1c1010" stroke-width="1.9" stroke-linecap="round" stroke-linejoin="round"/>
<path d="M833.8 408.4C833.1 410.2 830.8 416.0 829.5 419.3C828.1 422.5 827.3 424.0 825.8 428.0C824.2 432.0 822.3 437.8 820.3 443.2C818.3 448.7 816.0 455.2 813.8 460.6C811.6 466.1 809.4 471.0 807.3 475.9C805.1 480.8 804.0 484.4 800.7 490.0C797.5 495.7 791.7 503.4 787.7 509.6C783.7 515.8 779.7 521.6 776.8 527.0C773.9 532.5 771.7 537.5 770.2 542.3C768.8 547.0 768.4 553.1 768.1 555.3" fill="none" stroke="#1c1010" stroke-width="1.9" stroke-linecap="round" stroke-linejoin="round"/>
<path d="M685.3 600.0C685.3 600.0 700.6 594.0 707.1 590.2C713.6 586.4 719.4 581.3 724.5 577.1C729.6 572.9 733.2 568.2 737.6 565.1C741.9 562.0 745.6 560.2 750.6 558.6C755.7 557.0 761.9 556.0 768.1 555.3C774.2 554.6 787.7 554.2 787.7 554.2C787.7 554.2 785.5 577.1 785.5 577.1C785.5 577.1 768.1 584.4 759.4 588.0C750.6 591.6 741.9 595.2 733.2 598.9C724.5 602.5 715.3 606.5 707.1 609.8C698.9 613.0 684.2 618.5 684.2 618.5C684.2 618.5 685.3 600.0 685.3 600.0Z" fill="#a88862" stroke="#1c1010" stroke-width="2.2" stroke-linejoin="round" stroke-linecap="round"/>
<path d="M684.2 618.5C684.2 618.5 698.9 613.0 707.1 609.8C715.3 606.5 724.5 602.5 733.2 598.9C741.9 595.2 750.8 591.6 759.4 588.0C767.9 584.4 784.4 577.1 784.4 577.1C784.4 577.1 779.1 593.8 776.8 598.9C774.4 604.0 770.2 607.6 770.2 607.6C770.2 607.6 754.6 607.6 748.5 608.7C742.3 609.8 738.7 612.1 733.2 614.1C727.8 616.1 720.9 618.6 715.8 620.6C710.7 622.6 706.7 621.7 702.7 626.1C698.8 630.4 695.1 640.8 691.9 646.8C688.6 652.8 683.1 662.0 683.1 662.0C683.1 662.0 684.2 618.5 684.2 618.5Z" fill="#8f7159" stroke="#1c1010" stroke-width="2.2" stroke-linejoin="round" stroke-linecap="round"/>
<path d="M844.0 404.0C843.2 407.8 844.3 420.0 844.5 428.0C844.6 436.0 844.6 444.7 845.1 451.9C845.6 459.2 846.4 465.2 847.3 471.5C848.2 477.9 848.9 483.3 850.6 490.0C852.2 496.7 854.2 504.5 857.1 511.8C860.0 519.0 865.4 528.1 868.0 533.5C870.5 539.0 872.3 544.4 872.3 544.4C872.3 544.4 885.0 546.6 891.9 548.8C898.8 551.0 906.8 554.4 913.7 557.5C920.6 560.6 927.0 564.6 933.3 567.3C939.7 570.0 951.8 573.8 951.8 573.8C951.8 573.8 951.8 562.9 951.8 562.9C951.8 562.9 946.2 560.2 942.0 557.5C937.8 554.8 931.1 551.0 926.8 546.6C922.4 542.3 919.9 537.2 915.9 531.4C911.9 525.6 906.9 518.7 902.8 511.8C898.8 504.9 895.1 496.7 891.5 490.0C887.9 483.3 884.8 477.9 881.5 471.5C878.2 465.2 874.9 458.5 871.9 451.9C868.9 445.4 866.3 438.5 863.6 432.3C861.0 426.2 858.4 419.5 856.0 414.9C853.6 410.4 851.5 406.9 849.5 405.1C847.5 403.3 844.9 400.2 844.0 404.0Z" fill="url(#gr)" stroke="#1c1010" stroke-width="2.2" stroke-linejoin="round" stroke-linecap="round"/>
<path d="M847.3 405.8C848.1 408.4 850.7 415.9 852.3 421.5C853.9 427.0 855.4 433.1 857.1 438.9C858.8 444.7 860.4 450.5 862.5 456.3C864.7 462.1 867.6 468.1 870.2 473.7C872.7 479.3 874.9 483.7 877.8 490.0C880.7 496.4 883.8 504.5 887.6 511.8C891.4 519.0 895.6 526.3 900.6 533.5C905.7 540.8 915.2 551.7 918.1 555.3" fill="none" stroke="#1c1010" stroke-width="1.9" stroke-linecap="round" stroke-linejoin="round"/>
<path d="M845.8 407.3C846.2 410.0 847.5 418.0 848.4 423.6C849.3 429.3 850.1 435.2 851.2 441.0C852.4 446.9 853.6 452.7 855.4 458.5C857.1 464.3 859.8 470.6 861.9 475.9C864.0 481.1 866.2 484.1 868.0 490.0C869.7 496.0 870.9 503.1 872.3 511.8C873.8 520.5 876.0 537.2 876.7 542.3" fill="none" stroke="#1c1010" stroke-width="1.9" stroke-linecap="round" stroke-linejoin="round"/>
<path d="M872.3 544.4C872.3 544.4 885.0 546.6 891.9 548.8C898.8 551.0 906.8 554.4 913.7 557.5C920.6 560.6 927.0 564.6 933.3 567.3C939.7 570.0 951.8 573.8 951.8 573.8C951.8 573.8 954.0 591.2 954.0 591.2C954.0 591.2 938.6 589.6 931.1 588.0C923.7 586.4 916.6 583.4 909.4 581.5C902.1 579.5 887.6 576.0 887.6 576.0C887.6 576.0 881.4 560.6 878.9 555.3C876.3 550.1 872.3 544.4 872.3 544.4Z" fill="#8f7559" stroke="#1c1010" stroke-width="2.2" stroke-linejoin="round" stroke-linecap="round"/>
<path d="M887.6 576.0C887.6 576.0 902.1 579.5 909.4 581.5C916.6 583.4 923.7 586.4 931.1 588.0C938.6 589.6 954.0 591.2 954.0 591.2C954.0 591.2 956.2 640.2 956.2 640.2C956.2 640.2 945.5 634.1 939.8 629.4C934.2 624.6 929.0 618.1 922.4 611.9C915.9 605.8 906.5 598.3 900.6 592.3C894.8 586.4 887.6 576.0 887.6 576.0Z" fill="#765d4e" stroke="#1c1010" stroke-width="2.2" stroke-linejoin="round" stroke-linecap="round"/>
<polygon points="951.8,562.9 1006.9,509.2 1010.4,516.1 1010.6,528.1 952.5,573.8" fill="#a87a7c" stroke="#1c1010" stroke-width="2.2" stroke-linejoin="round"/>
<polygon points="952.5,573.8 1010.6,528.1 1011.7,545.5 954.0,590.6" fill="#a98b67" stroke="#1c1010" stroke-width="2.2" stroke-linejoin="round"/>
<polygon points="954.0,590.6 1011.7,545.5 1016.0,614.1 957.7,665.3" fill="#88694f" stroke="#1c1010" stroke-width="2.2" stroke-linejoin="round"/>
<path d="M683.1 662.0C683.1 662.0 688.6 652.8 691.9 646.8C695.1 640.8 698.8 630.4 702.7 626.1C706.7 621.7 710.7 622.6 715.8 620.6C720.9 618.6 727.8 616.1 733.2 614.1C738.7 612.1 742.7 609.8 748.5 608.7C754.3 607.6 768.1 607.6 768.1 607.6C768.1 607.6 773.9 604.0 776.8 598.9C779.7 593.8 783.3 584.4 785.5 577.1C787.7 569.8 788.0 562.6 789.8 555.3C791.7 548.1 794.0 541.6 796.4 533.5C798.7 525.5 801.5 514.2 804.0 507.0C806.5 499.7 809.4 495.2 811.6 490.0C813.8 484.9 815.2 480.8 817.1 475.9C818.9 471.0 820.9 466.1 822.9 460.6C824.9 455.2 827.5 448.7 829.0 443.2C830.6 437.8 831.6 432.3 832.3 428.0C833.0 423.6 833.0 421.1 833.4 417.1C833.8 413.1 834.5 404.0 834.5 404.0C834.5 404.0 839.9 403.6 839.9 403.6C839.9 403.6 833.8 489.0 832.3 511.8C830.8 534.5 830.8 523.2 831.2 540.1C831.6 557.0 834.5 613.0 834.5 613.0C834.5 613.0 822.0 617.9 816.0 620.6C810.0 623.4 805.4 626.1 798.5 629.4C791.7 632.6 781.9 637.5 774.6 640.2C767.3 643.0 761.9 643.9 755.0 645.7C748.1 647.5 741.2 649.0 733.2 651.1C725.2 653.3 715.4 656.9 707.1 658.8C698.8 660.6 683.1 662.0 683.1 662.0Z" fill="#e9532b" stroke="#1c1010" stroke-width="2.2" stroke-linejoin="round" stroke-linecap="round"/>
<path d="M829.5 551.0C829.5 551.0 834.5 613.0 834.5 613.0C834.5 613.0 798.5 629.4 798.5 629.4C798.5 629.4 800.7 607.6 802.9 598.9C805.1 590.2 808.3 584.4 811.6 577.1C814.9 569.8 819.5 559.7 822.5 555.3C825.5 551.0 829.5 551.0 829.5 551.0Z" fill="#f1b14c" stroke="#1c1010" stroke-width="2.2" stroke-linejoin="round" stroke-linecap="round"/>
<path d="M836.9 451.9C836.5 454.8 835.4 464.3 834.5 469.4C833.5 474.4 832.6 477.2 831.2 482.4C829.9 487.6 828.5 494.5 826.4 500.7C824.4 506.8 821.9 513.0 819.0 519.2C816.1 525.3 812.1 529.2 809.2 537.7C806.4 546.1 805.4 559.7 801.8 569.9C798.2 580.1 791.1 591.1 787.7 598.9C784.2 606.6 783.3 609.4 781.1 616.3C779.0 623.2 775.7 636.2 774.6 640.2" fill="none" stroke="#1c1010" stroke-width="1.9" stroke-linecap="round" stroke-linejoin="round"/>
<path d="M830.8 529.2C829.6 533.2 826.4 545.2 823.6 553.1C820.8 561.1 817.1 569.5 813.8 577.1C810.5 584.7 806.5 590.2 804.0 598.9C801.5 607.6 799.5 624.3 798.5 629.4" fill="none" stroke="#1c1010" stroke-width="1.9" stroke-linecap="round" stroke-linejoin="round"/>
<path d="M839.9 403.6C839.9 403.6 844.0 404.0 844.0 404.0C844.0 404.0 844.3 420.0 844.5 428.0C844.6 436.0 844.6 444.7 845.1 451.9C845.6 459.2 846.4 465.2 847.3 471.5C848.2 477.9 848.9 483.3 850.6 490.0C852.2 496.7 854.2 504.5 857.1 511.8C860.0 519.0 864.4 526.3 868.0 533.5C871.6 540.8 875.6 548.4 878.9 555.3C882.1 562.2 884.0 568.8 887.6 574.9C891.2 581.1 894.8 586.2 900.6 592.3C906.5 598.5 915.9 605.8 922.4 611.9C929.0 618.1 934.2 624.6 939.8 629.4C945.5 634.1 956.2 640.2 956.2 640.2C956.2 640.2 957.7 665.3 957.7 665.3C957.7 665.3 935.6 658.6 926.8 655.5C918.0 652.4 912.3 649.7 905.0 646.8C897.7 643.9 891.2 642.1 883.2 638.1C875.2 634.1 865.2 627.0 857.1 622.8C849.0 618.6 834.7 613.0 834.7 613.0C834.7 613.0 831.4 557.0 831.0 540.1C830.6 523.2 830.8 534.5 832.3 511.8C833.8 489.0 839.9 403.6 839.9 403.6Z" fill="#e24c26" stroke="#1c1010" stroke-width="2.2" stroke-linejoin="round" stroke-linecap="round"/>
<path d="M831.0 540.1C831.0 540.1 839.3 554.6 844.0 561.9C848.8 569.1 854.6 576.7 859.3 583.6C864.0 590.5 868.7 596.7 872.3 603.2C876.0 609.8 879.2 617.1 881.0 622.8C882.9 628.6 883.2 637.6 883.2 637.6C883.2 637.6 865.2 626.9 857.1 622.8C849.0 618.7 834.7 613.0 834.7 613.0C834.7 613.0 831.0 540.1 831.0 540.1Z" fill="#b98b3f" stroke="#1c1010" stroke-width="2.2" stroke-linejoin="round" stroke-linecap="round"/>
<path d="M834.5 460.6C834.6 462.5 835.0 467.9 835.3 471.5C835.6 475.2 834.4 475.5 836.2 482.4C838.0 489.3 842.2 503.2 846.0 513.1C849.8 523.0 854.6 532.2 858.8 541.8C863.0 551.4 866.2 560.6 871.2 570.6C876.3 580.5 882.5 592.3 888.9 601.5C895.3 610.6 903.8 618.5 909.6 625.4C915.3 632.4 920.4 638.2 923.3 643.1C926.2 648.0 926.6 652.9 927.2 654.8" fill="none" stroke="#1c1010" stroke-width="1.9" stroke-linecap="round" stroke-linejoin="round"/>
<path d="M839.5 404.0C839.2 409.8 838.3 427.6 837.7 438.9C837.2 450.1 836.4 463.0 836.0 471.5C835.6 480.1 835.7 483.3 835.1 490.0C834.5 496.7 833.0 503.4 832.3 511.8C831.6 520.1 830.8 523.2 831.2 540.1C831.6 557.0 833.9 600.9 834.5 613.0" fill="none" stroke="#1c1010" stroke-width="1.9" stroke-linecap="round" stroke-linejoin="round"/>
<path d="M825.8 405.1C823.5 406.1 819.1 411.1 816.0 413.8C812.9 416.6 810.2 419.1 807.3 421.5C804.4 423.8 801.5 425.8 798.5 428.0C795.6 430.2 792.2 432.3 789.8 434.5C787.5 436.7 785.8 438.9 784.4 441.0C782.9 443.2 782.4 445.4 781.1 447.6C779.9 449.8 778.6 452.8 776.8 454.1C775.0 455.4 771.7 454.1 770.2 455.2C768.8 456.3 767.7 458.8 768.1 460.6C768.4 462.5 772.1 463.9 772.4 466.1C772.8 468.3 771.7 471.4 770.2 473.7C768.8 476.1 766.2 478.2 763.7 480.2C761.2 482.2 757.7 483.9 755.0 485.7C752.3 487.5 748.8 489.3 747.4 491.1C745.9 492.9 745.7 495.3 746.3 496.6C746.8 497.8 748.5 498.9 750.6 498.8C752.8 498.6 756.5 497.1 759.4 495.5C762.3 493.9 765.3 491.5 768.1 489.0C770.8 486.4 773.5 483.5 775.7 480.2C777.9 477.0 779.5 472.6 781.1 469.4C782.8 466.1 784.0 463.2 785.5 460.6C786.9 458.1 788.8 456.5 789.8 454.1C790.9 451.8 790.9 448.9 792.0 446.5C793.1 444.1 794.2 442.1 796.4 440.0C798.5 437.8 802.2 435.8 805.1 433.4C808.0 431.1 810.9 428.5 813.8 425.8C816.7 423.1 819.9 420.1 822.5 417.1C825.1 414.1 828.9 409.9 829.5 408.0C830.0 406.0 828.0 404.1 825.8 405.1Z" fill="#e9532b" stroke="#1c1010" stroke-width="1.6" stroke-linejoin="round" stroke-linecap="round"/>
<path d="M914.8 532.5C914.1 529.4 919.5 528.3 922.4 528.1C925.3 527.9 930.1 529.0 932.2 531.4C934.3 533.7 933.4 538.8 935.0 542.3C936.7 545.7 939.0 550.4 942.0 552.1C945.0 553.7 950.5 553.3 952.9 552.1C955.3 550.8 956.4 546.4 956.2 544.4C956.0 542.4 952.0 541.5 951.8 540.1C951.6 538.6 952.7 537.2 955.1 535.7C957.4 534.3 962.9 533.5 966.0 531.4C969.1 529.2 972.9 525.6 973.6 522.7C974.3 519.8 969.8 516.7 970.3 514.0C970.9 511.2 974.0 508.3 976.9 506.3C979.8 504.3 983.8 502.5 987.7 502.0C991.7 501.4 997.6 501.9 1000.8 503.1C1004.0 504.3 1006.9 509.2 1006.9 509.2C1006.9 509.2 951.8 562.9 951.8 562.9C951.8 562.9 946.2 560.2 942.0 557.5C937.8 554.8 931.3 550.8 926.8 546.6C922.2 542.4 915.5 535.5 914.8 532.5Z" fill="#6e8347" stroke="#1c1010" stroke-width="1.5" stroke-linejoin="round" stroke-linecap="round"/>
<path d="M851.7 405.1C851.3 407.1 855.1 413.3 857.1 417.1C859.1 420.9 861.1 424.4 863.6 428.0C866.2 431.6 869.4 435.2 872.3 438.9C875.2 442.5 878.5 446.1 881.0 449.8C883.6 453.4 885.4 457.0 887.6 460.6C889.8 464.3 891.9 468.3 894.1 471.5C896.3 474.8 898.1 477.3 900.6 480.2C903.2 483.1 905.7 486.2 909.4 489.0C913.0 491.7 919.5 493.1 922.4 496.5C925.3 500.0 925.0 506.0 926.8 509.6C928.6 513.2 931.9 514.3 933.3 518.3C934.8 522.3 934.8 528.8 935.5 533.5C936.2 538.3 936.2 543.3 937.7 546.6C939.1 549.9 941.7 552.4 944.2 553.1C946.7 553.9 951.1 552.4 952.9 551.0C954.7 549.5 955.4 546.2 955.1 544.4C954.7 542.6 950.7 541.5 950.7 540.1C950.7 538.6 952.5 537.2 955.1 535.7C957.6 534.3 964.5 532.8 966.0 531.4C967.4 529.9 965.6 527.9 963.8 527.0C962.0 526.1 957.6 527.0 955.1 525.9C952.5 524.8 949.8 522.8 948.5 520.5C947.3 518.1 946.4 514.3 947.5 511.8C948.5 509.2 954.2 507.8 955.1 505.2C956.0 502.7 954.0 498.9 952.9 496.5C951.8 494.2 951.5 493.1 948.5 491.1C945.6 489.1 939.8 486.4 935.5 484.6C931.1 482.8 925.3 482.1 922.4 480.2C919.5 478.4 917.3 474.6 918.1 473.7C918.8 472.8 923.1 474.1 926.8 474.8C930.4 475.5 935.8 477.3 939.8 478.1C943.8 478.8 950.7 479.2 950.7 479.2C950.7 479.2 943.8 474.4 939.8 472.6C935.8 470.8 931.1 469.4 926.8 468.3C922.4 467.2 917.2 466.3 913.7 466.1C910.3 465.9 908.3 468.4 906.1 467.2C903.9 465.9 902.6 461.6 900.6 458.5C898.6 455.4 896.3 451.6 894.1 448.7C891.9 445.8 889.8 443.8 887.6 441.0C885.4 438.3 883.6 435.2 881.0 432.3C878.5 429.4 874.9 426.5 872.3 423.6C869.8 420.7 868.0 418.0 865.8 414.9C863.6 411.8 861.6 406.8 859.3 405.1C856.9 403.5 852.0 403.1 851.7 405.1Z" fill="#e9532b" stroke="#1c1010" stroke-width="1.6" stroke-linejoin="round" stroke-linecap="round"/>
<path d="M628.3 529.2C628.3 529.2 633.0 526.0 635.2 525.9C637.5 525.9 640.0 526.9 641.8 528.8C643.6 530.6 646.1 536.8 646.1 536.8C646.1 536.8 658.1 539.2 663.5 539.0C669.0 538.8 678.8 535.7 678.8 535.7C678.8 535.7 683.1 545.5 683.1 545.5C683.1 545.5 691.9 548.8 691.9 548.8C691.9 548.8 695.1 553.1 695.1 553.1C695.1 553.1 703.8 551.7 706.0 552.1C708.2 552.4 708.2 555.3 708.2 555.3C708.2 555.3 685.3 569.5 685.3 569.5C685.3 569.5 628.3 529.2 628.3 529.2Z" fill="#a0c253" stroke="#1c1010" stroke-width="1.5" stroke-linejoin="round" stroke-linecap="round"/>
<ellipse cx="753.9" cy="460.6" rx="5.2" ry="2.6" fill="#e9532b" stroke="#1c1010" stroke-width="1.4" transform="rotate(-15 753.9 460.6)"/>
<ellipse cx="741.5" cy="482.4" rx="5.2" ry="2.8" fill="#e9532b" stroke="#1c1010" stroke-width="1.4" transform="rotate(-10 741.5 482.4)"/>
<ellipse cx="895.2" cy="437.1" rx="5.7" ry="3.3" fill="#e9532b" stroke="#1c1010" stroke-width="1.4" transform="rotate(35 895.2 437.1)"/>
<path d="M825.8 402.3C825.8 402.3 824.1 393.9 822.5 391.0C820.9 388.0 818.7 385.9 816.0 384.4C813.2 383.0 808.9 381.6 806.2 382.3C803.5 382.9 799.9 388.4 799.9 388.4C799.9 388.4 800.0 383.9 801.8 382.3C803.6 380.6 807.6 378.9 810.5 378.3C813.4 377.8 817.1 378.4 819.2 379.0C821.4 379.6 823.6 381.8 823.6 381.8C823.6 381.8 823.0 377.8 821.4 374.6C819.8 371.4 816.6 365.5 813.8 362.7C811.0 359.8 804.6 357.4 804.6 357.4C804.6 357.4 809.1 355.8 812.0 357.2C815.0 358.6 819.5 362.7 822.5 365.9C825.5 369.2 830.1 376.8 830.1 376.8C830.1 376.8 831.6 373.4 832.3 369.2C833.0 365.0 832.7 356.8 834.5 351.8C836.3 346.8 843.2 339.1 843.2 339.1C843.2 339.1 843.9 345.3 844.3 349.6C844.6 353.9 844.8 360.7 845.4 364.8C845.9 369.0 847.5 374.6 847.5 374.6C847.5 374.6 851.4 366.8 854.1 362.7C856.8 358.5 860.4 352.9 863.9 349.6C867.3 346.3 874.8 343.1 874.8 343.1C874.8 343.1 870.8 350.0 868.2 354.0C865.7 357.9 861.5 363.2 859.5 367.0C857.5 370.8 856.2 376.8 856.2 376.8C856.2 376.8 860.4 373.7 863.9 372.5C867.3 371.2 873.0 369.5 876.9 369.2C880.9 368.9 887.4 370.5 887.4 370.5C887.4 370.5 880.5 373.0 876.9 374.6C873.4 376.2 868.8 378.3 866.0 380.1C863.3 381.9 860.6 385.5 860.6 385.5C860.6 385.5 865.7 387.7 868.2 388.8C870.8 389.9 873.9 390.8 875.8 392.1C877.8 393.4 880.2 396.6 880.2 396.6C880.2 396.6 875.7 396.6 872.6 396.4C869.5 396.2 864.4 394.6 861.7 395.3C859.0 396.0 856.2 400.8 856.2 400.8C856.2 400.8 853.5 403.3 850.8 403.6C848.1 403.9 843.0 402.2 839.9 402.3C836.8 402.4 834.7 404.0 832.3 404.0C829.9 404.0 825.8 402.3 825.8 402.3Z" fill="#1c1010" stroke="#1c1010" stroke-width="5.4" stroke-linejoin="miter" stroke-miterlimit="5"/>
<path d="M825.8 402.3C825.8 402.3 824.1 393.9 822.5 391.0C820.9 388.0 818.7 385.9 816.0 384.4C813.2 383.0 808.9 381.6 806.2 382.3C803.5 382.9 799.9 388.4 799.9 388.4C799.9 388.4 800.0 383.9 801.8 382.3C803.6 380.6 807.6 378.9 810.5 378.3C813.4 377.8 817.1 378.4 819.2 379.0C821.4 379.6 823.6 381.8 823.6 381.8C823.6 381.8 823.0 377.8 821.4 374.6C819.8 371.4 816.6 365.5 813.8 362.7C811.0 359.8 804.6 357.4 804.6 357.4C804.6 357.4 809.1 355.8 812.0 357.2C815.0 358.6 819.5 362.7 822.5 365.9C825.5 369.2 830.1 376.8 830.1 376.8C830.1 376.8 831.6 373.4 832.3 369.2C833.0 365.0 832.7 356.8 834.5 351.8C836.3 346.8 843.2 339.1 843.2 339.1C843.2 339.1 843.9 345.3 844.3 349.6C844.6 353.9 844.8 360.7 845.4 364.8C845.9 369.0 847.5 374.6 847.5 374.6C847.5 374.6 851.4 366.8 854.1 362.7C856.8 358.5 860.4 352.9 863.9 349.6C867.3 346.3 874.8 343.1 874.8 343.1C874.8 343.1 870.8 350.0 868.2 354.0C865.7 357.9 861.5 363.2 859.5 367.0C857.5 370.8 856.2 376.8 856.2 376.8C856.2 376.8 860.4 373.7 863.9 372.5C867.3 371.2 873.0 369.5 876.9 369.2C880.9 368.9 887.4 370.5 887.4 370.5C887.4 370.5 880.5 373.0 876.9 374.6C873.4 376.2 868.8 378.3 866.0 380.1C863.3 381.9 860.6 385.5 860.6 385.5C860.6 385.5 865.7 387.7 868.2 388.8C870.8 389.9 873.9 390.8 875.8 392.1C877.8 393.4 880.2 396.6 880.2 396.6C880.2 396.6 875.7 396.6 872.6 396.4C869.5 396.2 864.4 394.6 861.7 395.3C859.0 396.0 856.2 400.8 856.2 400.8C856.2 400.8 853.5 403.3 850.8 403.6C848.1 403.9 843.0 402.2 839.9 402.3C836.8 402.4 834.7 404.0 832.3 404.0C829.9 404.0 825.8 402.3 825.8 402.3Z" fill="#ea542c" stroke="#ea542c" stroke-width="1.4" stroke-linejoin="miter" stroke-miterlimit="5"/>
<ellipse cx="799.6" cy="332.2" rx="2.0" ry="1.7" fill="#5a2436" stroke="#1c1010" stroke-width="1.4" transform="rotate(0 799.6 332.2)"/>
<ellipse cx="768.1" cy="404.5" rx="1.7" ry="2.8" fill="#5a2436" stroke="#1c1010" stroke-width="1.4" transform="rotate(15 768.1 404.5)"/>
<ellipse cx="799.4" cy="332.2" rx="2.4" ry="2.0" fill="#5a2436" stroke="#1c1010" stroke-width="1.4" transform="rotate(0 799.4 332.2)"/>
<ellipse cx="885.4" cy="351.1" rx="3.7" ry="2.2" fill="#6a2c3a" stroke="#1c1010" stroke-width="1.4" transform="rotate(-25 885.4 351.1)"/>
<ellipse cx="895.6" cy="362.0" rx="2.4" ry="2.8" fill="#6a2c3a" stroke="#1c1010" stroke-width="1.4" transform="rotate(0 895.6 362.0)"/>
<ellipse cx="902.8" cy="393.6" rx="3.3" ry="2.2" fill="#6a2c3a" stroke="#1c1010" stroke-width="1.4" transform="rotate(0 902.8 393.6)"/>
<ellipse cx="856.9" cy="327.0" rx="3.3" ry="7.8" fill="#e8642f" stroke="#1c1010" stroke-width="1.4" transform="rotate(15 856.9 327.0)"/>
<ellipse cx="873.9" cy="310.8" rx="4.1" ry="3.7" fill="#e8642f" stroke="#1c1010" stroke-width="1.4" transform="rotate(0 873.9 310.8)"/>
<ellipse cx="817.1" cy="315.8" rx="2.0" ry="2.4" fill="#5a2436" stroke="#1c1010" stroke-width="1.4" transform="rotate(0 817.1 315.8)"/>
<ellipse cx="843.6" cy="310.8" rx="2.0" ry="2.2" fill="#5a2436" stroke="#1c1010" stroke-width="1.4" transform="rotate(0 843.6 310.8)"/>

<path d="M846.800 631.800L817.300 687" stroke="#1c1010" stroke-width="2.600" stroke-linecap="round"/>
<g fill="#fff" stroke="#fff" stroke-width="1.400" font-family="DejaVu Sans, Liberation Sans, sans-serif" font-weight="200">
<text x="609.500" y="366.500" font-size="56" transform="rotate(-3 612 366)" textLength="38" lengthAdjust="spacingAndGlyphs">B</text>
<text x="646.500" y="364.500" font-size="51" transform="rotate(3 646 364)" textLength="30" lengthAdjust="spacingAndGlyphs">O</text>
<text x="679" y="378.500" font-size="57" transform="rotate(4 679 378)" textLength="26" lengthAdjust="spacingAndGlyphs">8</text>
<text x="722" y="370" font-size="24" transform="rotate(23 722 370)" textLength="45" lengthAdjust="spacingAndGlyphs">oom</text>
<text x="756" y="386" font-size="60" transform="rotate(31 766 388)">!</text>
</g>
<g fill="#1c1010" stroke="#1c1010" stroke-width="0.500" font-family="DejaVu Sans, Liberation Sans, sans-serif" font-weight="200">
<text x="733" y="720.500" font-size="31.500" transform="rotate(-6 733 720)" textLength="57" lengthAdjust="spacingAndGlyphs">4400</text>
<text x="789" y="707" font-size="30" textLength="14" lengthAdjust="spacingAndGlyphs">°</text>
<text x="801" y="711" font-size="17" textLength="11" lengthAdjust="spacingAndGlyphs">c</text>
</g>
</svg>
<div class="abs" style="left:651px;top:166px;width:345px;height:119.500px;background:#fcf4a9;box-shadow:0 0 2px rgba(150,110,90,0.35)"></div>
<div class="t" id="nName" style="left:669.8px;top:179.500px;font-size:12.800px;font-weight:bold;color:#b4ac62;letter-spacing:0.01px">Brook Wells</div>
<div class="t" id="nDate" style="left:903.4px;top:179.500px;font-size:12.800px;font-weight:bold;color:#c6bf93;letter-spacing:-0.01px">Mon 4:11 PM</div>
<div class="t" id="nL1" style="left:669px;top:201.500px;font-size:12.800px;color:#1d1d1d;letter-spacing:0px">Hydrogen peroxide molecules are very unstable and</div>
<div class="t" id="nL2" style="left:669px;top:216.500px;font-size:12.800px;color:#1d1d1d;letter-spacing:-0px">naturally decompose into water and oxygen gas.</div>
<div class="t" id="nL3" style="left:669px;top:231.500px;font-size:12.800px;color:#1d1d1d;letter-spacing:-0.01px">The chemical equation for this decompostion is:</div>
<div class="t" id="pNum" style="left:1002px;top:719px;font-size:20.500px;color:#1c1c1c;letter-spacing:-0.16px">03</div>
<!--PAGER-END-->
<!--PAGER-CONTENT-->

<div class="abs" style="left:1218px;top:115px;width:18px;height:663px;background:#fcfcfe"></div>
<div class="abs" style="left:1206px;top:343px;width:5px;height:205px;background:#c9cde0;border-radius:3px"></div>
<svg class="abs" style="left:1222px;top:441px" width="7" height="10" viewBox="0 0 7 10"><path d="M1.200 1.500l4.300 3.500-4.300 3.500z" fill="#555"/></svg>
<div class="abs" style="left:1141.500px;top:135px;width:35px;height:35px;border-radius:50%;background:#fff;border:1px solid #d9dae3;box-shadow:0 1px 3px rgba(120,130,170,0.25)"></div>
<svg class="abs" style="left:1148px;top:141px" width="22" height="22" viewBox="0 0 22 22"><rect x="1.500" y="1.500" width="12" height="12" rx="2.500" fill="#fff" stroke="#5a8ef0" stroke-width="1.400"/><path d="M4 4.500l1.500 1.200-1.500 1.200" stroke="#5a8ef0" stroke-width="1.100" fill="none"/><rect x="7.500" y="7.500" width="13" height="13" rx="2.500" fill="#2f6de6"/><text x="14" y="17.600" font-family="Liberation Sans, sans-serif" font-size="9" font-weight="bold" fill="#fff" text-anchor="middle">W</text></svg>
<!--RIGHT-CONTENT-->

<!-- STATUS -->
<div id="status" class="abs"></div>

<div class="t" id="sDim" style="left:23.3px;top:790px;font-size:12.500px;color:#666;letter-spacing:0.09px">27.94 x 21.59 cm</div>
<div class="abs" style="left:446px;top:781px;width:25px;height:26px;background:#e3e7f4;border-radius:3px"></div>
<svg class="abs" style="left:450px;top:786px" width="18" height="18" viewBox="0 0 18 18"><path d="M4.500 10v-5.500a1.200 1.200 0 0 1 2.400 0v-1.500a1.200 1.200 0 0 1 2.400 0v0.500a1.200 1.200 0 0 1 2.400 0v1.500a1.200 1.200 0 0 1 2.400 0v6.500a5 5 0 0 1-5 5h-1.500a4.500 4.500 0 0 1-3.800-2.200l-2.500-4a1.200 1.200 0 0 1 2-1.300z" fill="#fff" stroke="#3f4048" stroke-width="1.300" stroke-linejoin="round"/><path d="M6.900 4.500v4M9.300 3.500v5M11.700 5v3.500" stroke="#3f4048" stroke-width="1.100"/></svg>
<svg class="abs" style="left:487px;top:786px" width="17" height="18" viewBox="0 0 17 18"><path d="M2 1.500v15M0.800 1.500h2.400M0.800 16.500h2.400" stroke="#5d5e66" stroke-width="1.4" fill="none" stroke-linecap="round" stroke-linejoin="round"/><path d="M6.500 3.500v11l3-2.800 2 4 1.600-0.800-2-3.800h4z" stroke="#5d5e66" stroke-width="1.4" fill="none" stroke-linecap="round" stroke-linejoin="round"/></svg>
<svg class="abs" style="left:522px;top:787px" width="16" height="15" viewBox="0 0 16 15"><path d="M2 1.500v12M13.500 1.500l-6.500 6 6.500 6" stroke="#5d5e66" stroke-width="1.4" fill="none" stroke-linecap="round" stroke-linejoin="round"/></svg>
<svg class="abs" style="left:559px;top:787px" width="11" height="15" viewBox="0 0 11 15"><path d="M8.500 1.500l-6.500 6 6.500 6" stroke="#5d5e66" stroke-width="1.4" fill="none" stroke-linecap="round" stroke-linejoin="round"/></svg>
<div class="abs" style="left:588px;top:781.500px;width:71px;height:25.500px;background:#fff;border:1px solid #dcdde4;border-radius:3px"></div>
<div class="t" id="sPg" style="left:611px;top:788px;font-size:13px;color:#555">2</div>
<div class="t" id="sPg2" style="left:621px;top:790px;font-size:10.500px;color:#aaa">/3</div>
<svg class="abs" style="left:677px;top:787px" width="11" height="15" viewBox="0 0 11 15"><path d="M2.500 1.500l6.500 6-6.500 6" stroke="#5d5e66" stroke-width="1.4" fill="none" stroke-linecap="round" stroke-linejoin="round"/></svg>
<svg class="abs" style="left:708px;top:787px" width="16" height="15" viewBox="0 0 16 15"><path d="M14 1.500v12M2.500 1.500l6.500 6-6.500 6" stroke="#5d5e66" stroke-width="1.4" fill="none" stroke-linecap="round" stroke-linejoin="round"/></svg>
<svg class="abs" style="left:742px;top:786px" width="18" height="18" viewBox="0 0 18 18"><path d="M5 15.500h-1.500a1.500 1.500 0 0 1-1.500-1.500v-11a1.500 1.500 0 0 1 1.500-1.500h11a1.500 1.500 0 0 1 1.500 1.500v13" stroke="#dddee4" stroke-width="1.4" fill="none" stroke-linecap="round" stroke-linejoin="round"/><path d="M3 13l-2 2.500 2 2" stroke="#dddee4" stroke-width="1.4" fill="none" stroke-linecap="round" stroke-linejoin="round"/></svg>
<svg class="abs" style="left:779px;top:786px" width="18" height="18" viewBox="0 0 18 18"><path d="M13 15.500h-9.500a1.500 1.500 0 0 1-1.500-1.500v-11a1.500 1.500 0 0 1 1.500-1.500h11a1.500 1.500 0 0 1 1.500 1.500v10" stroke="#dddee4" stroke-width="1.4" fill="none" stroke-linecap="round" stroke-linejoin="round"/><path d="M14 13l2.500 2.500-2.500 2" stroke="#dddee4" stroke-width="1.4" fill="none" stroke-linecap="round" stroke-linejoin="round"/></svg>
<svg class="abs" style="left:904px;top:788px" width="14" height="12" viewBox="0 0 14 12"><path d="M1 6h11.500" stroke="#777" stroke-width="1.200"/></svg>
<div class="abs" style="left:942px;top:792.500px;width:116px;height:1.500px;background:#dfe0e6;margin-top:0.800px"></div>
<div class="abs" style="left:942px;top:792px;width:38px;height:3.500px;background:#6b7089;border-radius:2px"></div>
<div class="abs" style="left:977px;top:787.500px;width:13px;height:13px;background:#fff;border:1.500px solid #4a4b55;border-radius:50%"></div>
<svg class="abs" style="left:1081px;top:787px" width="14" height="14" viewBox="0 0 14 14"><path d="M1 7h12M7 1v12" stroke="#666" stroke-width="1.200"/></svg>
<div class="abs" style="left:1111px;top:781.500px;width:75px;height:25.500px;background:#fff;border:1px solid #dcdde4;border-radius:3px"></div>
<div class="t" id="sZoom" style="left:1126px;top:788px;font-size:13px;color:#555;letter-spacing:-0.34px">70%</div>
<svg class="abs" style="left:1169px;top:791px" width="9" height="7" viewBox="0 0 9 7"><path d="M1.500 1.500l3 3 3-3" stroke="#555" stroke-width="1.300" fill="none" stroke-linecap="round" stroke-linejoin="round"/></svg>
<svg class="abs" style="left:1200px;top:785px" width="18" height="18" viewBox="0 0 18 18"><rect x="1" y="1" width="16" height="16" rx="2.500" stroke="#5d5e66" stroke-width="1.300" fill="none"/><path d="M4.500 7v-2.500h2.500M11 4.500h2.500v2.500M13.500 11v2.500h-2.500M7 13.500h-2.500v-2.500" stroke="#5d5e66" stroke-width="1.300" fill="none"/></svg>
<!--STATUS-CONTENT-->

</div></div>
</body>
</html>
